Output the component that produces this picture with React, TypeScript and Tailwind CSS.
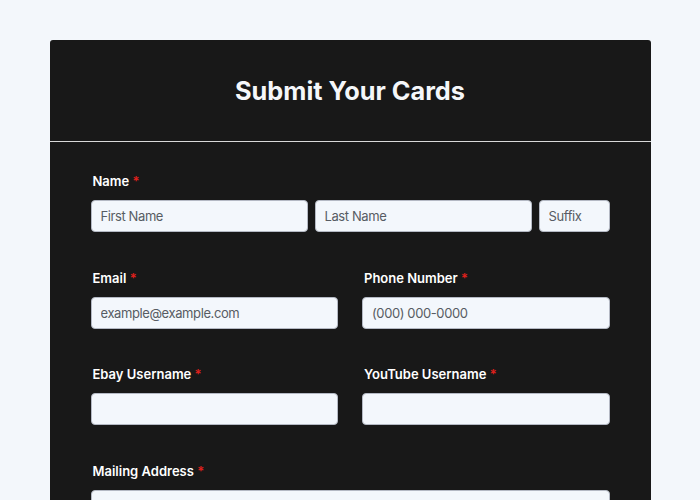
import React from "react";

const Label = ({ text }: { text: string }) => (
  <label className="block pl-[2px] text-[13px] leading-5 font-semibold text-white">
    {text} <span className="text-[#e0201c]">*</span>
  </label>
);

const Input = ({ placeholder = "" }: { placeholder?: string }) => (
  <input
    type="text"
    placeholder={placeholder}
    className="block h-8 w-full rounded-[4px] border border-[#b4b9c4] bg-[#f3f7fc] px-[9px] text-[13px] tracking-[-0.4px] text-[#222] placeholder:text-[#575c63] outline-none"
  />
);

const App = () => {
  return (
    <div className="min-h-[500px] bg-[#f3f7fb] pt-10 font-['Inter',sans-serif]">
      <div className="mx-auto w-[601px] rounded-t-[3px] bg-[#181818]">
        <div className="flex h-[102px] items-center justify-center border-b border-[#d9d9d9]">
          <h1 className="text-[25.3px] font-bold text-[#f5f7fa]">
            Submit Your Cards
          </h1>
        </div>
        <form className="flex flex-col gap-[35.5px] px-[41px] pt-[29px] pb-10">
          <div>
            <Label text="Name" />
            <div className="mt-[9px] grid grid-cols-[1fr_1fr_71px] gap-[7px]">
              <Input placeholder="First Name" />
              <Input placeholder="Last Name" />
              <Input placeholder="Suffix" />
            </div>
          </div>
          <div className="grid grid-cols-2 gap-6">
            <div>
              <Label text="Email" />
              <div className="mt-[9px]">
                <Input placeholder="example@example.com" />
              </div>
            </div>
            <div>
              <Label text="Phone Number" />
              <div className="mt-[9px]">
                <Input placeholder="(000) 000-0000" />
              </div>
            </div>
          </div>
          <div className="grid grid-cols-2 gap-6">
            <div>
              <Label text="Ebay Username" />
              <div className="mt-[9px]">
                <Input />
              </div>
            </div>
            <div>
              <Label text="YouTube Username" />
              <div className="mt-[9px]">
                <Input />
              </div>
            </div>
          </div>
          <div>
            <Label text="Mailing Address" />
            <div className="mt-[9px]">
              <Input />
            </div>
          </div>
        </form>
      </div>
    </div>
  );
};

export default App;
